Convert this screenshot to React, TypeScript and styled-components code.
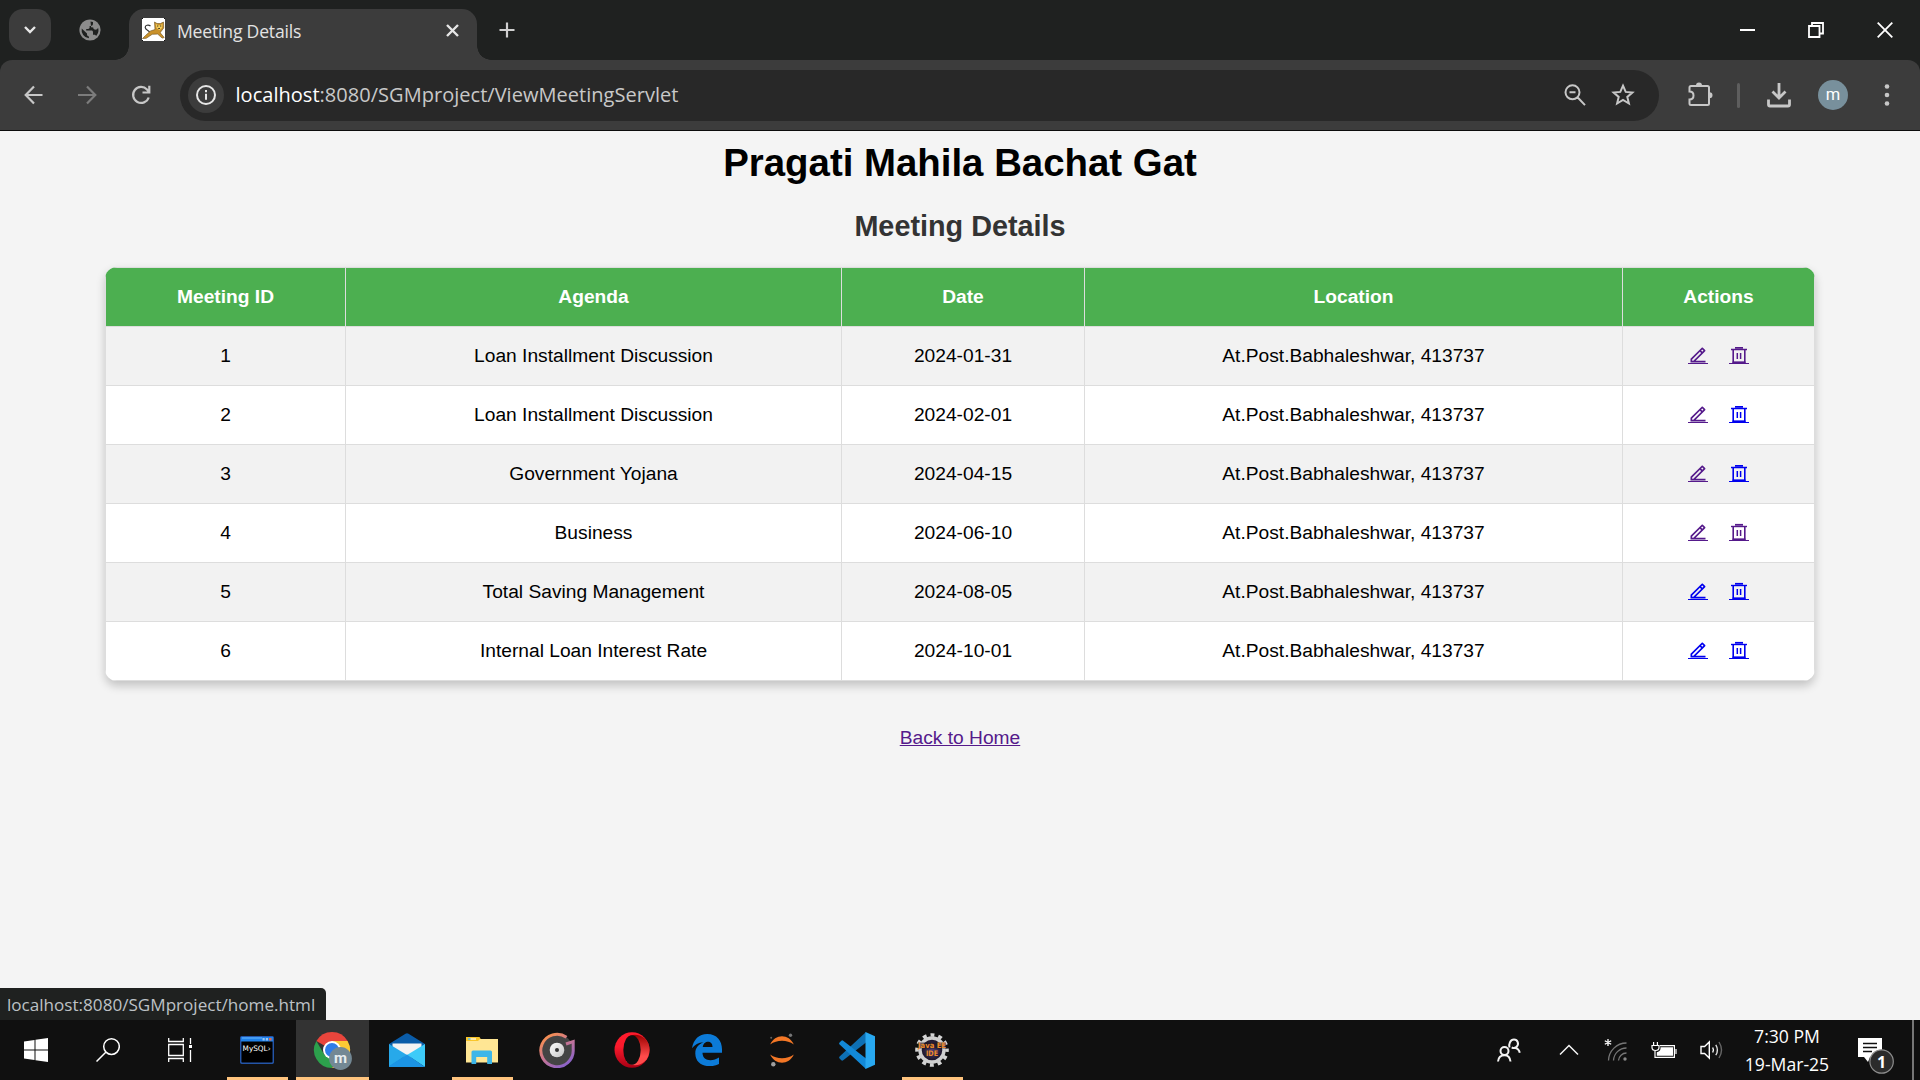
import React from "react";
import styled, { createGlobalStyle } from "styled-components";
import { RiEdit2Line } from "react-icons/ri";

const Global = createGlobalStyle`
  * { box-sizing: border-box; }
  html, body { margin: 0; padding: 0; }
  body { background: #f4f4f4; overflow: hidden; }
  svg { display: block; }
`;

const ui = `"Open Sans", "Noto Sans", sans-serif`;

const Screen = styled.div`
  display: flex;
  flex-direction: column;
  width: 1920px;
  height: 1080px;
  background: #f4f4f4;
  font-family: ${ui};
`;

const TabStrip = styled.div`
  display: flex;
  height: 60px;
  background: #1f2120;
  padding-left: 9px;
`;

const TabSearch = styled.div`
  display: flex;
  align-items: center;
  justify-content: center;
  width: 42px;
  height: 42px;
  margin-top: 9px;
  border-radius: 14px;
  background: #3c3c3c;
`;

const PinnedTab = styled.div`
  display: flex;
  align-items: center;
  justify-content: center;
  width: 78px;
  height: 60px;
`;

const Tab = styled.div`
  position: relative;
  display: flex;
  align-items: center;
  width: 348px;
  height: 51px;
  margin-top: 9px;
  padding: 0 18px 9px 13px;
  border-radius: 15px 15px 0 0;
  background: #3c3c3c;
  &::before, &::after {
    content: "";
    position: absolute;
    bottom: 0;
    width: 14px;
    height: 14px;
  }
  &::before {
    left: -14px;
    background: radial-gradient(circle at 0 0, transparent 13.5px, #3c3c3c 14px);
  }
  &::after {
    right: -14px;
    background: radial-gradient(circle at 100% 0, transparent 13.5px, #3c3c3c 14px);
  }
`;

const Label = styled.span<{ $size: number; $color: string; $gap?: number }>`
  display: block;
  font-size: ${(p) => p.$size}px;
  line-height: 28px;
  letter-spacing: ${(p) => p.$gap ?? 0}px;
  color: ${(p) => p.$color};
  white-space: nowrap;
`;

const TabTitle = styled.div`
  flex: 1;
  padding: 2px 0 0 11px;
`;

const NewTab = styled.div`
  display: flex;
  align-items: center;
  justify-content: center;
  width: 60px;
  height: 60px;
`;

const Spacer = styled.div`
  flex: 1;
`;

const WindowButtons = styled.div`
  display: flex;
  padding-right: 1px;
`;

const WindowButton = styled.div`
  display: flex;
  align-items: center;
  justify-content: center;
  width: 69px;
  height: 59px;
`;

const ToolbarBack = styled.div`
  background: #1f2120;
`;

const Toolbar = styled.div`
  display: flex;
  align-items: center;
  height: 71px;
  border-radius: 12px 12px 0 0;
  border-bottom: 1px solid #0c0c0c;
  background: #3c3c3c;
  padding: 0 6px;
`;

const ToolButton = styled.div<{ $width: number }>`
  display: flex;
  align-items: center;
  justify-content: center;
  flex: none;
  width: ${(p) => p.$width}px;
  height: 48px;
`;

const Omnibox = styled.div`
  display: flex;
  align-items: center;
  width: 1479px;
  height: 51px;
  margin-left: 12px;
  padding: 0 12px 0 8px;
  border-radius: 26px;
  background: #282828;
`;

const SiteInfo = styled.div`
  display: flex;
  align-items: center;
  justify-content: center;
  width: 36px;
  height: 36px;
  margin-right: 11.5px;
  border-radius: 50%;
  background: #3c3c3c;
`;

const Host = styled.span`
  color: #ffffff;
`;

const Divider = styled.div`
  width: 3px;
  height: 25px;
  border-radius: 2px;
  background: #5e5e5e;
`;

const Avatar = styled.div`
  width: 30px;
  height: 30px;
  border-radius: 50%;
  background: #78909c;
  color: #fff;
  font: 400 16.5px/29px Roboto, sans-serif;
  text-align: center;
`;

const Page = styled.main`
  flex: 1;
  display: flex;
  flex-direction: column;
  align-items: center;
  font-family: Arial, "Liberation Sans", sans-serif;
  font-size: 19.2px;
`;

const Title = styled.h1`
  margin: 10px 0 0;
  font-size: 38.4px;
  line-height: 44px;
  color: #000;
`;

const Subtitle = styled.h2`
  margin: 24px 0 0;
  font-size: 28.8px;
  line-height: 34px;
  color: #333;
`;

const Meetings = styled.table`
  width: 1710px;
  margin-top: 24px;
  table-layout: fixed;
  border-collapse: separate;
  border-spacing: 0;
  border-radius: 12px;
  overflow: hidden;
  background: #fff;
  box-shadow: 0 4.8px 9.6px rgba(0, 0, 0, 0.2);
  text-align: center;
`;

const Column = styled.col<{ $width: number }>`
  width: ${(p) => p.$width}px;
`;

const Heading = styled.th`
  height: 60px;
  padding: 0 0 1px;
  border: 1px solid #ddd;
  border-left-width: 0;
  background: #4caf50;
  color: #fff;
  font-weight: bold;
  &:first-child { border-left-width: 1px; }
`;

const Cell = styled.td`
  height: 59px;
  padding: 0;
  border: 1px solid #ddd;
  border-top-width: 0;
  border-left-width: 0;
  color: #000;
  &:first-child { border-left-width: 1px; }
`;

const Row = styled.tr`
  &:nth-child(odd) { background: #f2f2f2; }
`;

const Actions = styled.div`
  display: flex;
  justify-content: center;
  gap: 21px;
  padding: 0 1px 2px 0;
`;

const ActionLink = styled.a<{ $visited: boolean }>`
  width: 20px;
  height: 20px;
  color: ${(p) => (p.$visited ? "#551a8b" : "#0000ee")};
  background: linear-gradient(currentColor, currentColor) 0 18px / 20px 1px no-repeat;
`;

const BackLink = styled.a`
  margin-top: 45px;
  line-height: 24px;
  color: #551a8b;
  text-decoration: underline;
`;

const StatusBubble = styled.div`
  display: flex;
  align-items: center;
  width: 326px;
  height: 32px;
  padding: 1px 0 0 7px;
  border-radius: 0 5px 0 0;
  background: #1f2120;
`;

const Taskbar = styled.footer`
  display: flex;
  height: 60px;
  background: #101010;
`;

const Task = styled.div<{ $width: number; $running?: boolean; $active?: boolean }>`
  display: flex;
  align-items: center;
  justify-content: center;
  flex: none;
  width: ${(p) => p.$width}px;
  height: 60px;
  margin: ${(p) => (p.$active ? "0 1px" : "0")};
  padding-top: ${(p) => (p.$running || p.$active ? 3 : 0)}px;
  padding-right: ${(p) => (p.$running || p.$active ? 2 : 0)}px;
  border-bottom: ${(p) => (p.$running || p.$active ? "3px solid #ffc47e" : "none")};
  background: ${(p) => (p.$active ? "#333" : "transparent")};
`;

const Gap = styled.div<{ $width: number }>`
  flex: none;
  width: ${(p) => p.$width}px;
`;

const Clock = styled.div`
  display: flex;
  flex-direction: column;
  align-items: center;
  width: 100px;
  padding-top: 2px;
`;

const ShowDesktop = styled.div`
  width: 8px;
  height: 60px;
  border-left: 2px solid #777;
`;

const rows = [
  ["1", "Loan Installment Discussion", "2024-01-31", true, true],
  ["2", "Loan Installment Discussion", "2024-02-01", true, false],
  ["3", "Government Yojana", "2024-04-15", true, false],
  ["4", "Business", "2024-06-10", true, true],
  ["5", "Total Saving Management", "2024-08-05", false, false],
  ["6", "Internal Loan Interest Rate", "2024-10-01", false, false],
] as const;

type StrokeProps = { w: number; h: number; d: string; sw?: number; color?: string };
const Stroke = ({ w, h, d, sw = 2, color = "#c7c7c7" }: StrokeProps) => (
  <svg width={w} height={h} viewBox={`0 0 ${w} ${h}`} fill="none" stroke={color} strokeWidth={sw}>
    <path d={d} />
  </svg>
);

const Bin = () => (
  <svg width="20" height="20" viewBox="0 0 20 20" fill="none" stroke="currentColor">
    <path d="M2 4.500h16" strokeWidth="1.400" />
    <path d="M6 2.800h8" strokeWidth="1.800" />
    <path d="M4.200 4.500v13h11.600v-13" strokeWidth="1.600" />
    <path d="M3.500 17.400h13" strokeWidth="1.800" />
    <path d="M8.300 8v6M11.600 8v6" strokeWidth="1.500" />
  </svg>
);

const Globe = () => (
  <svg width="24" height="24" viewBox="0 0 24 24">
    <circle cx="12" cy="12" r="10.600" fill="#8c8c8c" />
    <path fill="#1f2120" d="M12.500 3.500 15 4v1.800c0 1.400-1.200 2.200-2.400 2.200h-1v1.600c0 .9-.7 1.400-1.500 1.400H8.200v1.600h5.200c1 0 1.600.7 1.600 1.600v2.600h1.200c.9 0 1.600.5 1.900 1.200a8.400 8.400 0 0 0 2-8.200c-.6 1.600-1.800 2-3.400 1.800-1-.2-1.500-1-1.400-2l-2.200-.3zM3.700 10.400 9 15.600v1c0 1.100.9 1.900 1.900 1.900v1.800a8.500 8.500 0 0 1-7.200-9.900z" />
  </svg>
);

const Tomcat = () => (
  <svg width="24" height="24" viewBox="0 0 24 24">
    <path fill="#fff" d="M0 0h23v23H0z" />
    <path d="M8.500 8C6.500 6.500 3 7 3.200 9.500s3.600 2.700 4.600 5" fill="none" stroke="#333" strokeWidth="1.200" />
    <path d="M12.500 4l2.500 1.500h3.500L21.500 4l.2 6-2.500 3.300-1 1.500 4 4.700-2 .6-4.500-4-5.500.2-6 4-3.700.2 3-3 5-4.500 4.500-1.500z" fill="#c9912a" stroke="#6b4d18" strokeWidth=".6" />
    <path d="M13.700 6l2.800 1.200h1.500L20.500 6l-.5 4-2.500 2.200-3-2.200z" fill="#f2cd5c" />
    <path d="M15 8h1.300M18 8h1.300M16.200 10.500h1.800" stroke="#4a3c20" />
    <path d="M0 0h1v1H0zM22 0h1v1h-1zM0 22h1v1H0zM22 22h1v1h-1z" fill="#111" />
  </svg>
);

const MySql = () => (
  <svg width="34" height="28" viewBox="0 0 34 28">
    <rect x=".7" y=".7" width="32.600" height="26.600" rx="1.500" fill="#000" stroke="#2455a8" strokeWidth="1.500" />
    <path fill="#1e80e8" d="M1 1h32v4.500H1z" />
    <path fill="#68b6ff" d="M2 1.500h20v1H2z" />
    <path fill="#9cc8f4" d="M22.500 2h2.200v2.500h-2.200zM25.800 2H28v2.500h-2.200z" />
    <path fill="#e46a4c" d="M29 2h2.500v2.500H29z" />
    <text x="2.600" y="14.500" fontSize="7.500" fontFamily="DejaVu Sans, sans-serif" fill="#fff" textLength="28" lengthAdjust="spacingAndGlyphs">MySQL›</text>
  </svg>
);

const Chrome = () => (
  <svg width="40" height="40" viewBox="0 0 40 40">
    <path fill="#e8453c" d="M20 20 4.400 11A18 18 0 0 1 35.600 11z" />
    <path fill="#fcc934" d="M20 20V11h15.600A18 18 0 0 1 20 38l7.800-13.500z" />
    <path fill="#2ca04c" d="M20 38A18 18 0 0 1 4.400 11l7.800 13.500L20 29l3 0z" />
    <circle cx="20" cy="20" r="9" fill="#fff" />
    <circle cx="20" cy="20" r="7" fill="#2f7de9" />
    <circle cx="28.500" cy="28.500" r="11.400" fill="#738894" />
    <text x="28.500" y="33" fontSize="15" fontWeight="700" fontFamily="Roboto, sans-serif" fill="#e6ecef" textAnchor="middle">m</text>
  </svg>
);

const Mail = () => (
  <svg width="36" height="34" viewBox="0 0 36 34">
    <path fill="#0a5ca8" d="M0 11 16.500.8q1.500-1 3 0L36 11v6H0z" />
    <path fill="#f3f3f3" d="M3.500 10.500h29V20L18 26 3.500 18z" />
    <path fill="#27a9ea" d="M0 11l18 11L0 34z" />
    <path fill="#3dcbf8" d="M36 11v23L18 22z" />
    <path fill="#1b94e4" d="M0 34V33L18 21.600 36 34z" />
  </svg>
);

const Explorer = () => (
  <svg width="32" height="28" viewBox="0 0 32 28">
    <path fill="#f9c62b" d="M0 1h13.500l1.500 2.500L13 6H0z" />
    <path fill="#fff" d="M2 2.400h8v1.200H2z" />
    <path fill="#2aa7dc" d="M2 2.400h2.500v1.200H2z" />
    <path fill="#ffe694" d="M0 5h12l2-2h18v23.500H0z" />
    <path fill="#3db6e8" d="M5.500 28V16q0-1.500 1.500-1.500h17.500q1.500 0 1.500 1.500v12h-4.800v-7h-11v7z" />
  </svg>
);

const Groove = () => (
  <svg width="36" height="36" viewBox="0 0 36 36">
    <defs>
      <linearGradient id="groove" x1=".1" y1="0" x2=".8" y2="1">
        <stop offset="0" stopColor="#ff9445" />
        <stop offset=".5" stopColor="#c87593" />
        <stop offset="1" stopColor="#8561cc" />
      </linearGradient>
      <linearGradient id="disc" x2="1" y2="1">
        <stop offset="0" stopColor="#fff" />
        <stop offset="1" stopColor="#c4c4c4" />
      </linearGradient>
    </defs>
    <circle cx="18" cy="18" r="16" fill="#444" />
    <path d="M27.500 5.300A16.200 16.200 0 1 0 34.200 17.500V9.500L27 12" fill="none" stroke="url(#groove)" strokeWidth="3" />
    <circle cx="18" cy="18" r="7.300" fill="url(#disc)" />
    <circle cx="18" cy="18" r="2" fill="#333" />
  </svg>
);

const Opera = () => (
  <svg width="36" height="36" viewBox="0 0 36 36">
    <defs>
      <linearGradient id="operaA" x2="0" y2="1">
        <stop offset="0" stopColor="#ff1b2d" />
        <stop offset=".4" stopColor="#fa1a2c" />
        <stop offset="1" stopColor="#a70014" />
      </linearGradient>
      <linearGradient id="operaB" x2="0" y2="1">
        <stop offset="0" stopColor="#9c0000" />
        <stop offset=".7" stopColor="#ff4b4b" />
      </linearGradient>
    </defs>
    <ellipse cx="18" cy="18" rx="17.500" ry="17.800" fill="url(#operaA)" />
    <path fill="url(#operaB)" d="M12 6.500C19-1 35.500 3 35.500 18S19 37 12 29.500z" />
    <ellipse cx="18" cy="18" rx="8.700" ry="14.700" fill="#101010" />
  </svg>
);

const Edge = () => (
  <svg width="30" height="32" viewBox="0 0 30 32">
    <path fill="#0c7bd8" d="M0 14.200C1.500 5.500 6.800 0 15.300 0 24.800 0 30 6.800 30 15.200v3.600H10.500c.2 9 10.500 8.700 16.500 4.700v6.600C18 34.500 3.500 32.500 3.300 19.500 3.200 13.500 7 10 11.500 8.200c-5 .3-9 2.500-11.500 6zM10.800 13h9.700c0-7.300-9-6.500-9.700 0z" />
  </svg>
);

const Jupyter = () => (
  <svg width="26" height="34" viewBox="0 0 26 34">
    <path fill="#f37726" d="M1.200 11.500C6 .5 20 .5 24.800 11.500 18 6.500 8 6.500 1.200 11.500zM1.200 21.500c4.800 11 18.800 11 23.600 0-6.800 5-16.800 5-23.600 0z" />
    <circle cx="21.500" cy="2.300" r="1.700" fill="#767677" />
    <circle cx="4.300" cy="31.200" r="2.200" fill="#9e9e9e" />
    <circle cx="2.200" cy="4.800" r="1" fill="#616262" />
  </svg>
);

const VsCode = () => (
  <svg width="36" height="37" viewBox="0 0 36 37">
    <path fill="#0e70b4" d="M27 0v10.500L4.200 28.300q-1 .7-1.900 0L.6 26.600q-1-1 0-2z" />
    <path fill="#1289d8" d="M27 37V26.500L4.200 8.700q-1-.7-1.900 0L.6 10.400q-1 1 0 2z" />
    <path fill="#28a8f0" d="M26.500 0 36 4.300v28.400L26.500 37z" />
  </svg>
);

const JavaIde = () => (
  <svg width="34" height="36" viewBox="0 0 34 36">
    <defs>
      <radialGradient id="ide">
        <stop offset="0" stopColor="#513f73" />
        <stop offset="1" stopColor="#120e1d" />
      </radialGradient>
    </defs>
    <circle cx="17" cy="18" r="15" fill="none" stroke="#d4d4d4" strokeWidth="3.600" strokeDasharray="3.927 3.927" strokeDashoffset="1.960" />
    <circle cx="17" cy="18" r="12" fill="url(#ide)" stroke="#d0d0d0" strokeWidth="3.400" />
    <path fill="#1a1520" fillOpacity=".65" d="M3 10.500h28v6H3z" />
    <g fontFamily="DejaVu Sans, sans-serif" fontWeight="700" fill="#ee8a2a" textAnchor="middle">
      <text x="17" y="16.200" fontSize="7.500" textLength="28" lengthAdjust="spacingAndGlyphs">Java EE</text>
      <text x="17" y="24" fontSize="7.500" textLength="12" lengthAdjust="spacingAndGlyphs">IDE</text>
    </g>
  </svg>
);

const Tray = () => (
  <>
    <Task $width={24}>
      <svg width="24" height="24" viewBox="0 0 24 24" fill="none" stroke="#f2f2f2" strokeWidth="2">
        <circle cx="7.500" cy="13" r="4" />
        <path d="M1 23.500c.5-4.500 3-6.300 6.500-6.300s5.500 1.800 6 6.300M12.500 9.500c-1-3.500.8-8 4.500-8s5.300 4.500 2.700 7.200c-1.300 1.300-3.600 1.500-5 .6M17.500 9.800c3.200.3 4.700 2.500 5.300 5" />
      </svg>
    </Task>
    <Gap $width={38} />
    <Task $width={20}><Stroke w={20} h={12} d="M1 10.500 10 1.500l9 9" sw={1.5} color="#f4f4f4" /></Task>
    <Gap $width={25} />
    <Task $width={24}>
      <svg width="24" height="24" viewBox="0 0 24 24" fill="none" strokeWidth="1.300">
        <path stroke="#fff" d="M4 1v7M.8 2.800l6.400 3.400M7.200 2.800.8 6.200" />
        <path stroke="#777" d="M4.500 22.500A18 18 0 0 1 22.500 5M9.500 22.500A13 13 0 0 1 22.500 10M14.500 22.500a8 8 0 0 1 8-7.500" />
        <circle cx="21" cy="21" r="1.700" fill="#888" />
      </svg>
    </Task>
    <Gap $width={23} />
    <Task $width={26}>
      <svg width="26" height="18" viewBox="0 0 26 18" fill="none" stroke="#fff" strokeWidth="1.200">
        <path d="M9 4.600h14.400v11.800H4V10M2.600 1v4M6.400 1v4M1 4.500h7v2C8 8.500 6.500 9.500 4.500 9.500S1 8.500 1 6.500zM25 8v5" />
        <path fill="#fff" stroke="none" d="M9.500 6.200H22v8.600H5.800v-3.600c2 0 3.700-1.500 3.700-3.600z" />
      </svg>
    </Task>
    <Gap $width={23} />
    <Task $width={24}>
      <svg width="24" height="20" viewBox="0 0 24 20" fill="none" stroke="#fff" strokeWidth="1.400">
        <path d="M1 6.500h3.600L9.300 2v16l-4.700-4.500H1zM12.700 7.500q1.500 2.500 0 5" />
        <path stroke="#ddd" d="M15.800 4.800q3.200 5.200 0 10.400" />
        <path stroke="#666" d="M19 2q5 8 0 16" />
      </svg>
    </Task>
  </>
);

const Notifications = () => (
  <svg width="40" height="52" viewBox="0 -6 40 52">
    <path fill="#fff" d="M1 8h24v19H13l-2 5-4-5H1z" />
    <path stroke="#101010" strokeWidth="1.500" d="M6 13.500h14M6 17.500h14M6 21.500h9" />
    <circle cx="24.600" cy="31.500" r="11.700" fill="#2b2b2b" stroke="#8d8d8d" strokeWidth="1.200" />
    <text x="24.600" y="37.500" fontSize="16" fontWeight="700" fontFamily="Open Sans, sans-serif" fill="#fff" textAnchor="middle">1</text>
  </svg>
);

export default function App() {
  return (
    <Screen>
      <Global />
      <TabStrip>
        <TabSearch><Stroke w={16} h={12} d="M3 3l5 5 5-5" sw={2.4} color="#e8e8e8" /></TabSearch>
        <PinnedTab><Globe /></PinnedTab>
        <Tab>
          <Tomcat />
          <TabTitle><Label $size={17.6} $color="#e3e3e3" $gap={-0.2}>Meeting Details</Label></TabTitle>
          <Stroke w={13} h={13} d="M1 1l11 11M12 1 1 12" sw={2.4} color="#e6e6e6" />
        </Tab>
        <NewTab><Stroke w={16} h={16} d="M8 .5v15M.5 8h15" sw={2.2} color="#d0d0d0" /></NewTab>
        <Spacer />
        <WindowButtons>
          <WindowButton><Stroke w={16} h={16} d="M1 8h15" color="#fff" /></WindowButton>
          <WindowButton><Stroke w={16} h={16} d="M1 4h10.500v11H1zM4 4V1h11v10.500h-3" sw={1.8} color="#fff" /></WindowButton>
          <WindowButton><Stroke w={16} h={16} d="M.7.7l14.600 14.600M15.300.7.7 15.300" sw={1.8} color="#fff" /></WindowButton>
        </WindowButtons>
      </TabStrip>
      <ToolbarBack>
        <Toolbar>
          <ToolButton $width={54}><Stroke w={20} h={20} d="M19.500 10H3M11 1.500 2.700 10l8.300 8.500" sw={2.2} /></ToolButton>
          <ToolButton $width={54}><Stroke w={20} h={20} d="M1 10h17M10 1.500l8.300 8.500-8.300 8.500" sw={2.2} color="#7c7c7c" /></ToolButton>
          <ToolButton $width={54}><Stroke w={20} h={20} d="M17.700 12.500A8 8 0 1 1 16 4.500l2 2.400M18.300.8V7.500H11.500" sw={2.2} /></ToolButton>
          <Omnibox>
            <SiteInfo>
              <svg width="22" height="22" viewBox="0 0 22 22" fill="none" stroke="#e6e6e6" strokeWidth="2">
                <circle cx="11" cy="11" r="9" />
                <path d="M11 9.800v6M11 6v2.200" />
              </svg>
            </SiteInfo>
            <Label $size={20} $gap={0.03} $color="#c8c8c8"><Host>localhost</Host>:8080/SGMproject/ViewMeetingServlet</Label>
            <Spacer />
            <ToolButton $width={48}>
              <Stroke w={22} h={22} d="M8.500 1.300a7 7 0 1 0 0 14 7 7 0 0 0 0-14M5.500 8.300h6M13.500 13.300l7.500 7.800" />
            </ToolButton>
            <ToolButton $width={48}>
              <Stroke w={24} h={24} d="M12 2.700l2.700 6.200 6.700.6-5.100 4.400 1.600 6.600-5.900-3.500-5.900 3.500 1.600-6.600-5.100-4.400 6.700-.6z" />
            </ToolButton>
          </Omnibox>
          <Gap $width={14} />
          <ToolButton $width={54}>
            <svg width="26" height="28" viewBox="0 0 26 28">
              <g transform="translate(.5 -.5)">
                <path d="M3.500 5.500h16.500q1.500 0 1.500 1.500v16q0 1.500-1.500 1.500h-16.500q-1.500 0-1.500-1.500v-4q4 0 4-4t-4-4V7q0-1.500 1.500-1.500z" fill="none" stroke="#c7c7c7" strokeWidth="2" />
                <path d="M8.500 5a3 3 0 0 1 6 0zM22 11.800a3 3 0 0 1 0 6z" fill="#c7c7c7" />
              </g>
            </svg>
          </ToolButton>
          <Gap $width={10} />
          <Divider />
          <Gap $width={15} />
          <ToolButton $width={48}>
            <Stroke w={24} h={26} d="M12 1v15M5.500 9.500 12 16l6.500-6.500M1.500 17.500v5q0 1.500 1.500 1.500h18q1.500 0 1.500-1.500v-5" sw={2.8} />
          </ToolButton>
          <Gap $width={15} />
          <Avatar>m</Avatar>
          <Gap $width={15} />
          <ToolButton $width={48}>
            <svg width="6" height="24" viewBox="0 0 6 24" fill="#c7c7c7">
              <circle cx="3" cy="3.500" r="2.300" /><circle cx="3" cy="12" r="2.300" /><circle cx="3" cy="20.500" r="2.300" />
            </svg>
          </ToolButton>
        </Toolbar>
      </ToolbarBack>
      <Page>
        <Title>Pragati Mahila Bachat Gat</Title>
        <Subtitle>Meeting Details</Subtitle>
        <Meetings>
          <colgroup>
            <Column $width={241} /><Column $width={496} /><Column $width={243} /><Column $width={538} /><Column $width={192} />
          </colgroup>
          <thead>
            <tr>
              {["Meeting ID", "Agenda", "Date", "Location", "Actions"].map((h) => <Heading key={h}>{h}</Heading>)}
            </tr>
          </thead>
          <tbody>
            {rows.map(([id, agenda, date, edited, removed]) => (
              <Row key={id}>
                <Cell>{id}</Cell>
                <Cell>{agenda}</Cell>
                <Cell>{date}</Cell>
                <Cell>At.Post.Babhaleshwar, 413737</Cell>
                <Cell>
                  <Actions>
                    <ActionLink $visited={edited}><RiEdit2Line size={20} /></ActionLink>
                    <ActionLink $visited={removed}><Bin /></ActionLink>
                  </Actions>
                </Cell>
              </Row>
            ))}
          </tbody>
        </Meetings>
        <BackLink>Back to Home</BackLink>
      </Page>
      <StatusBubble><Label $size={17.1} $color="#bdc1c6">localhost:8080/SGMproject/home.html</Label></StatusBubble>
      <Taskbar>
        <Task $width={72}>
          <svg width="24" height="24" viewBox="0 0 24 24" fill="#fff">
            <path d="M0 3.400 10.500 2v9.500H0zM11.500 1.800 24 0v11.500H11.500zM0 12.500h10.500V22L0 20.600zM11.500 12.500H24V24l-12.500-1.800z" />
          </svg>
        </Task>
        <Task $width={72}><Stroke w={24} h={24} d="M15.500.8a7.800 7.800 0 1 0 0 15.600 7.800 7.800 0 0 0 0-15.600M9.500 14.500.5 23.500" sw={1.5} color="#fff" /></Task>
        <Task $width={72}>
          <svg width="24" height="24" viewBox="0 0 24 24" fill="none" stroke="#fff" strokeWidth="1.300">
            <path d="M.7 0v3.500h14.600V0M.7 6.500h14.600v11H.7zM.7 24v-3.500h14.600V24M22.500 0v6M22.500 12v12" />
            <path fill="#fff" stroke="none" d="M21 7h3v3h-3z" />
          </svg>
        </Task>
        <Gap $width={11} />
        <Task $width={61} $running><MySql /></Task>
        <Gap $width={7} />
        <Task $width={73} $active><Chrome /></Task>
        <Gap $width={-1} />
        <Task $width={74}><Mail /></Task>
        <Gap $width={8} />
        <Task $width={61} $running><Explorer /></Task>
        <Gap $width={6} />
        <Task $width={75}><Groove /></Task>
        <Task $width={75}><Opera /></Task>
        <Task $width={75}><Edge /></Task>
        <Task $width={75}><Jupyter /></Task>
        <Task $width={75}><VsCode /></Task>
        <Gap $width={8} />
        <Task $width={61} $running><JavaIde /></Task>
        <Spacer />
        <Tray />
        <Gap $width={13} />
        <Clock>
          <Label $size={17.6} $color="#fff">7:30 PM</Label>
          <Label $size={17.6} $color="#fff">19-Mar-25</Label>
        </Clock>
        <Gap $width={20} />
        <Task $width={40}><Notifications /></Task>
        <Gap $width={15} />
        <ShowDesktop />
      </Taskbar>
    </Screen>
  );
}
